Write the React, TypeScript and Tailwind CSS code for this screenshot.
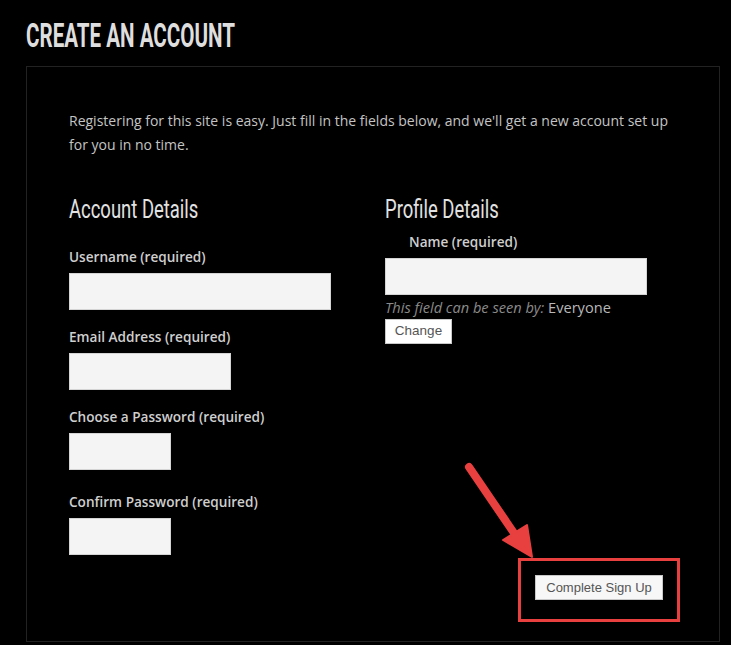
import { ReactNode } from "react";

const body = { fontFamily: '"Open Sans", "Liberation Sans", sans-serif' };
const btn = { fontFamily: '"Liberation Sans", Arial, sans-serif' };
const condensed = { fontFamily: 'Roboto, "Liberation Sans", sans-serif' };

function Heading({ children }: { children: ReactNode }) {
  return (
    <h3 className="h-[30px] text-[26px] leading-[30px] text-[#e2e2e2] whitespace-nowrap origin-left scale-x-[0.71]" style={condensed}>
      {children}
    </h3>
  );
}

function Label({ children, className = "" }: { children: ReactNode; className?: string }) {
  return <label className={`block text-[13.6px] leading-5 font-semibold text-[#cfcfcf] ${className}`}>{children}</label>;
}

function Field({ width }: { width: string }) {
  return <input type="text" className={`block h-[37px] ${width} mt-[6px] bg-[#f4f4f4] border border-[#d4d4d4] outline-none`} />;
}

export default function App() {
  return (
    <div className="min-h-[645px] bg-black px-[26px] pt-[18px] relative" style={body}>
      <h1 className="h-[34px] text-[34px] leading-[34px] font-bold text-[#dedede] whitespace-nowrap origin-left scale-x-[0.605]" style={condensed}>
        CREATE AN ACCOUNT
      </h1>

      <div className="mt-[14px] w-[694px] border border-[#222] px-[42px] pt-[42px] pb-[41px]">
        <p className="text-[14px] leading-6 text-[#c4c4c4]">
          Registering for this site is easy. Just fill in the fields below, and we'll get a new account set up for you in no time.
        </p>

        <div className="mt-[37px] flex">
          <div className="w-[316px]">
            <Heading>Account Details</Heading>
            <Label className="mt-[23px]">Username (required)</Label>
            <Field width="w-[262px]" />
            <Label className="mt-[17px]">Email Address (required)</Label>
            <Field width="w-[162px]" />
            <Label className="mt-[17px]">Choose a Password (required)</Label>
            <Field width="w-[102px]" />
            <Label className="mt-[22px]">Confirm Password (required)</Label>
            <Field width="w-[102px]" />
          </div>

          <div className="flex-1">
            <Heading>Profile Details</Heading>
            <Label className="mt-[8px] pl-6">Name (required)</Label>
            <Field width="w-[262px]" />
            <p className="mt-[2px] text-[14.6px] leading-5 text-[#8a8a8a] whitespace-nowrap">
              <span className="italic">This field can be seen by:</span>{" "}
              <span className="text-[#b8b8b8]">Everyone</span>
            </p>
            <button className="mt-[1px] h-[25px] w-[67px] bg-white border border-[#c8c8c8] text-[13.5px] text-[#555]" style={btn}>
              Change
            </button>
          </div>
        </div>

        <div className="mt-[20px] flex justify-end pr-[14px]">
          <button className="h-[25px] w-[128px] bg-[#f7f7f7] border border-[#c8c8c8] text-[13px] text-[#555]" style={btn}>
            Complete Sign Up
          </button>
        </div>
      </div>

      {/* annotation */}
      <div className="absolute left-[518px] top-[558px] w-[162px] h-[64px] border-[3px] border-[#e8403f]" />
      <svg className="absolute left-0 top-0" width="731" height="645" viewBox="0 0 731 645" fill="none">
        <line x1="469" y1="467" x2="516" y2="536" stroke="#e8403f" strokeWidth="8" strokeLinecap="round" />
        <polygon points="503,540 527,525 532,557" fill="#e8403f" stroke="#e8403f" strokeWidth="2" strokeLinejoin="round" />
      </svg>
    </div>
  );
}
